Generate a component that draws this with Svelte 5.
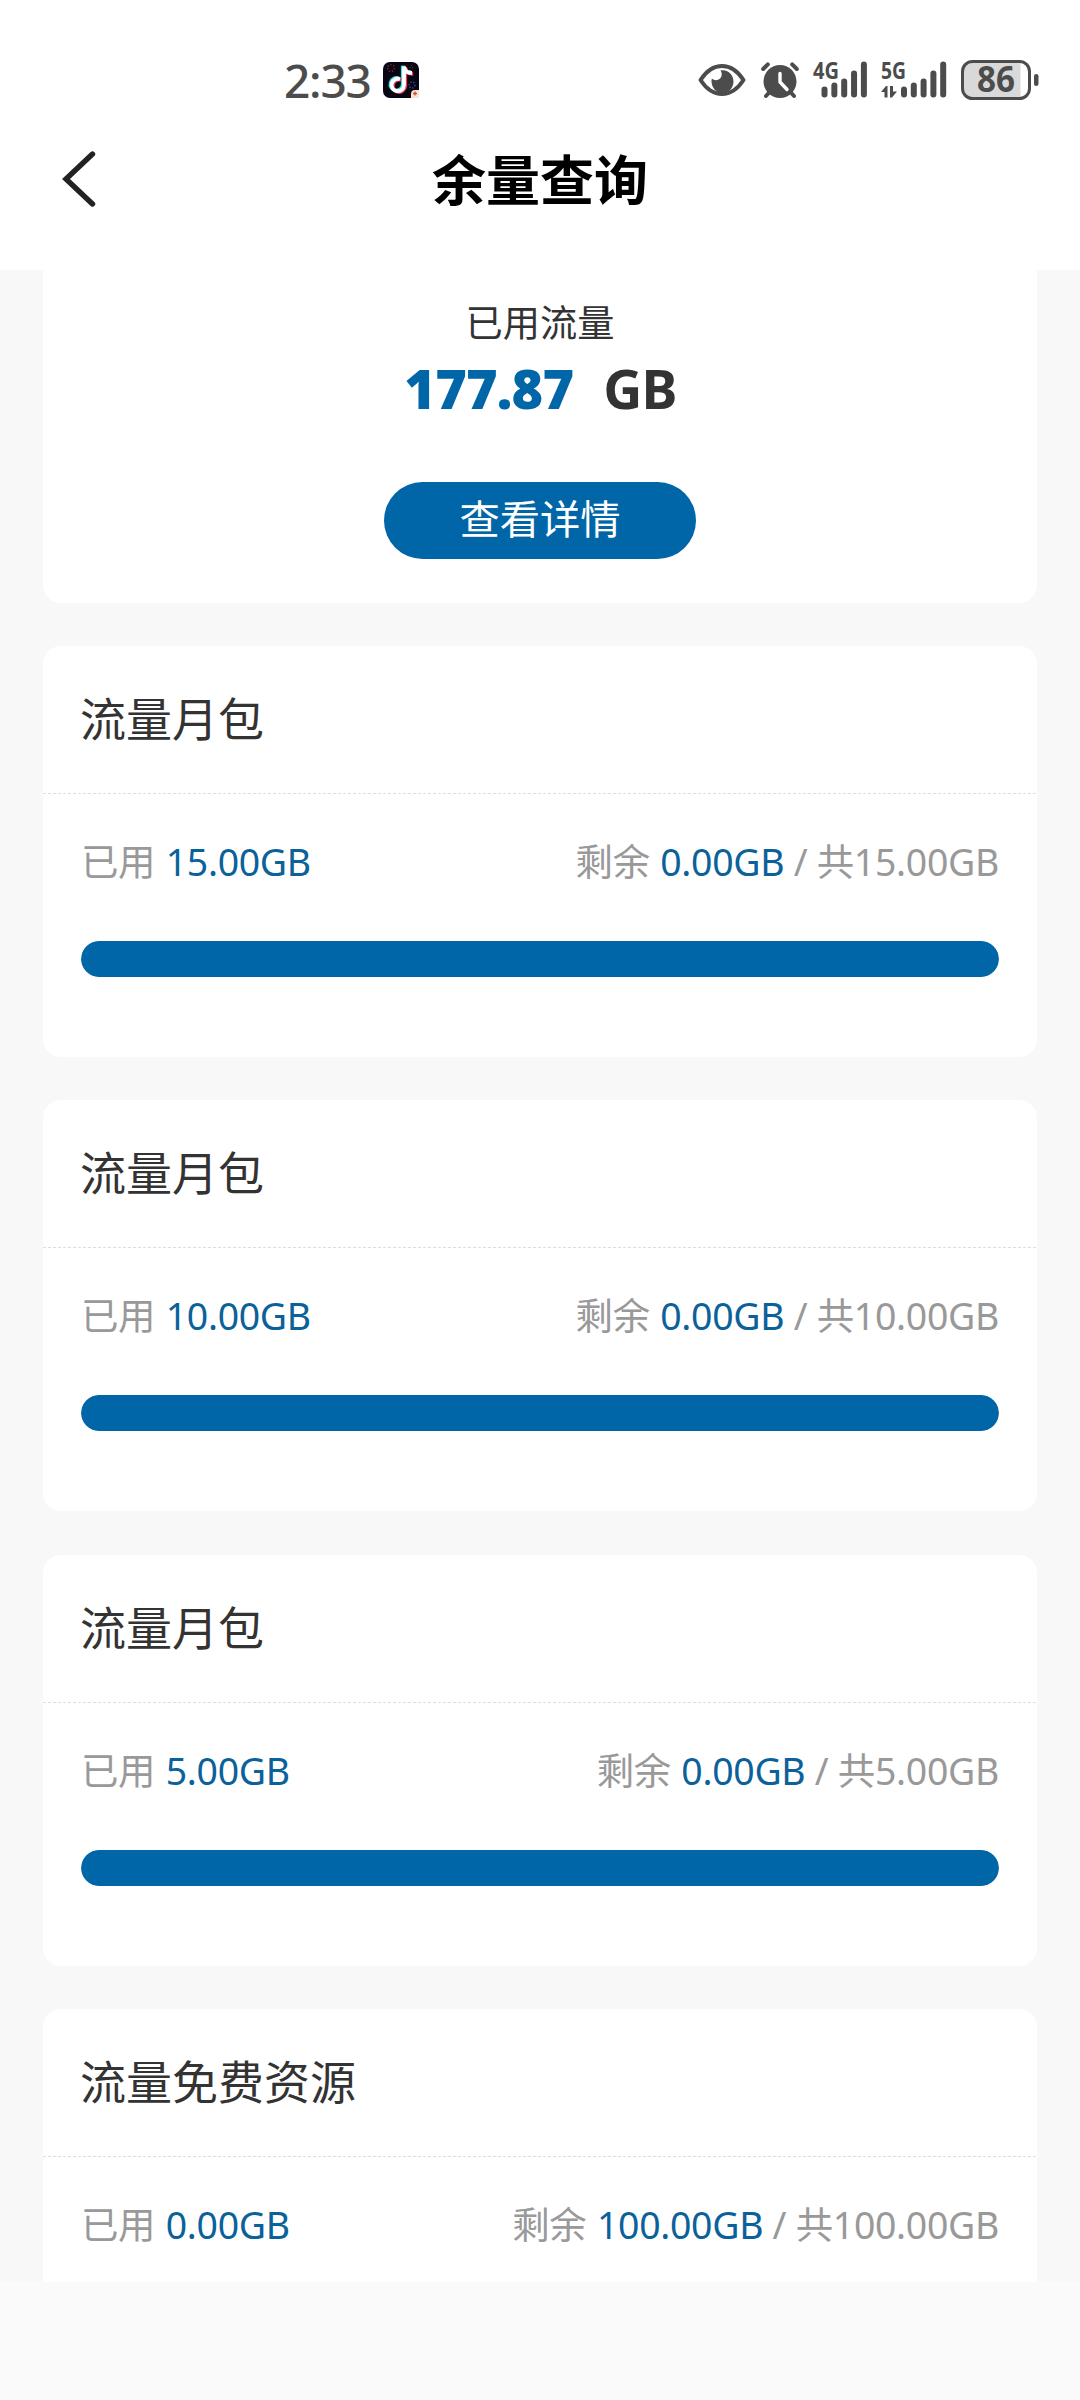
<script lang="ts">
  type Plan = { title: string; used: number; left: number; total: number };

  export let time: string = '2:33';
  export let battery: number = 86;
  export let usedTotal: string = '177.87';

  let plans: Plan[] = [
    { title: '流量月包', used: 15, left: 0, total: 15 },
    { title: '流量月包', used: 10, left: 0, total: 10 },
    { title: '流量月包', used: 5, left: 0, total: 5 },
    { title: '流量免费资源', used: 0, left: 100, total: 100 }
  ];

  // top edge of each signal bar, shortest first
  const signalTops = [25, 21, 17, 9, 0];

  const gb = (n: number) => n.toFixed(2) + 'GB';
  const percent = (p: Plan) => (p.used / p.total) * 100;
</script>

<div class="screen">
  <div class="status-bar">
    <span class="time">{time}</span>
    <svg class="app-icon" width="36" height="36" viewBox="0 0 36 36">
      <rect width="36" height="36" rx="7" fill="#070713" />
      <g fill="none" stroke-width="1.4" stroke-dasharray="1.3 1.7">
        <circle cx="8" cy="6" r="3.4" stroke="#8a2440" />
        <circle cx="29" cy="23" r="3" stroke="#3a47a8" />
        <circle cx="28.5" cy="5" r="1.5" stroke="#5c1a36" />
      </g>
      <g fill="none" stroke-width="3.8">
        <path d="M17 17.2a6.2 6.2 0 1 0 4 6V4.500c.5 4 3.500 6.500 8 6.500" stroke="#3fe0dc" transform="translate(-1.2 -.8)" />
        <path d="M17 17.2a6.2 6.2 0 1 0 4 6V4.500c.5 4 3.500 6.500 8 6.500" stroke="#f03a56" transform="translate(1.2 .8)" />
        <path d="M17 17.2a6.2 6.2 0 1 0 4 6V4.500c.5 4 3.500 6.500 8 6.500" stroke="#fff" />
      </g>
      <path d="M28 36v-4q0-4 4-4h4v8z" fill="#fbe3cf" />
      <path d="M32 29.500v4M30 31.500h4" stroke="#d8473f" stroke-width="1.3" />
    </svg>

    <div class="indicators">
      <svg class="eye" width="48" height="34" viewBox="0 0 48 34">
        <path d="M2.500 17C8 8.500 15.500 3 24 3s16 5.500 21.500 14C40 25.500 32.500 31 24 31S8 25.500 2.500 17z" fill="none" stroke="#4c4c4c" stroke-width="4" stroke-linejoin="round" />
        <path d="M22.500 7.500C30 6 35.500 12 35.500 18.500 35.500 25 30.500 30 24.500 30S13.500 25 13.500 18q0-1 .4-2.500c2.600 2.600 7 2 8.800-.8 1.600-2.600 1.200-5.200-.2-7.200z" fill="#4c4c4c" />
      </svg>
      <svg class="alarm" width="38" height="37" viewBox="0 0 38 37">
        <g stroke="#4c4c4c" stroke-width="4" stroke-linecap="round">
          <path d="M2.200 7L6.800 2.400M35.800 7L31.200 2.400M9 29.500L5 34M29 29.500l4 4.500" />
        </g>
        <circle cx="19" cy="19.500" r="16.500" fill="#4c4c4c" />
        <path d="M19 11.500V20l7 7.500" fill="none" stroke="#fff" stroke-width="3.4" stroke-linecap="round" stroke-linejoin="round" />
      </svg>
      <svg class="signal" width="54" height="38" viewBox="0 0 54 38">
        <text x="0" y="17.500" textLength="26" lengthAdjust="spacingAndGlyphs">4G</text>
        {#each signalTops as top, i}
          <rect x={8.5 + i * 9.85} y={top + 0.5} width="6" height={36 - top} rx="3" />
        {/each}
      </svg>
      <svg class="signal" width="66" height="38" viewBox="0 0 66 38">
        <text x="0" y="17.500" textLength="25" lengthAdjust="spacingAndGlyphs">5G</text>
        <path d="M0 31l5-6h1.500v11.500h-3V31zM16 30.500l-5 6H9V25h3v5.500z" />
        {#each signalTops as top, i}
          <rect x={20 + i * 9.8} y={top + 0.5} width="6" height={36 - top} rx="3" />
        {/each}
      </svg>
      <svg class="battery" width="78" height="40" viewBox="0 0 78 40">
        <path d="M13 2h46.500v36H13Q2 38 2 27V13Q2 2 13 2z" fill="#d9d9d9" />
        <rect x="1.5" y="1.5" width="67" height="37" rx="10" fill="none" stroke="#4c4c4c" stroke-width="3" />
        <rect x="73" y="14" width="4.5" height="12" rx="2.2" fill="#4c4c4c" />
        <text x="16" y="32" textLength="38" lengthAdjust="spacingAndGlyphs">{battery}</text>
      </svg>
    </div>
  </div>

  <header>
    <svg class="back" width="36" height="56" viewBox="0 0 36 56">
      <path d="M31.500 3L5 28l26.500 25" fill="none" stroke="#222" stroke-width="5.4" stroke-linecap="round" />
    </svg>
    <h1>余量查询</h1>
  </header>

  <main>
    <section class="summary">
      <p class="label">已用流量</p>
      <p class="amount"><b>{usedTotal}</b><span>GB</span></p>
      <button>查看详情</button>
    </section>

    {#each plans as plan}
      <section class="card">
        <h2>{plan.title}</h2>
        <div class="usage">
          <div class="row">
            <span>已用 <em>{gb(plan.used)}</em></span>
            <span>剩余 <em>{gb(plan.left)}</em> / 共{gb(plan.total)}</span>
          </div>
          <div class="track">
            <div class="fill" style="width: {percent(plan)}%"></div>
          </div>
        </div>
      </section>
    {/each}
  </main>
</div>

<style>
  :global(body) {
    margin: 0;
    background: #fafafa;
  }

  .screen {
    display: flex;
    flex-direction: column;
    width: 1080px;
    height: 2400px;
    overflow: hidden;
    background: #fafafa;
    color: #333;
    font-family: 'Noto Sans', 'Noto Sans CJK SC', sans-serif;
  }

  .status-bar {
    display: flex;
    align-items: center;
    box-sizing: border-box;
    flex: none;
    height: 120px;
    padding: 40px 41px 0 284px;
    background: #fff;
  }

  .time {
    width: 99px;
    color: #4c4c4c;
    font-size: 46px;
    font-weight: 500;
    line-height: 80px;
    letter-spacing: -1.2px;
  }

  .indicators {
    display: flex;
    align-items: center;
    margin-left: auto;
  }

  .indicators svg {
    overflow: visible;
  }

  .alarm {
    margin-left: 15px;
  }

  .signal,
  .battery {
    margin-left: 14px;
  }

  .signal {
    fill: #4c4c4c;
  }

  .signal text {
    font-size: 23px;
    font-weight: 700;
  }

  .battery text {
    fill: #4c4c4c;
    font-size: 35px;
    font-weight: 700;
  }

  header {
    display: grid;
    grid-template-columns: 140px 1fr 140px;
    flex: none;
    height: 150px;
    background: #fff;
  }

  .back {
    margin: 31px 0 0 61px;
  }

  h1 {
    margin: 0;
    color: #000;
    font-size: 54px;
    font-weight: 700;
    line-height: 120px;
    text-align: center;
  }

  main {
    display: flex;
    flex-direction: column;
    gap: 43.33px;
    box-sizing: border-box;
    flex: none;
    height: 2012px;
    padding: 0 43px;
    overflow: hidden;
    background: #f8f8f8;
  }

  .summary {
    display: flex;
    flex-direction: column;
    align-items: center;
    flex: none;
    height: 332.67px;
    border-radius: 0 0 18px 18px;
    background: #fff;
  }

  p {
    margin: 0;
  }

  .label {
    margin-top: 25px;
    font-size: 37.2px;
    line-height: 56px;
  }

  .amount {
    display: flex;
    gap: 30px;
    padding-left: 1px;
    font-size: 54px;
    font-weight: 700;
    line-height: 74px;
    letter-spacing: -0.8px;
  }

  .amount b {
    color: #0066a8;
  }

  button {
    width: 312px;
    height: 77px;
    margin-top: 57px;
    padding: 0 0 3px;
    border: 0;
    border-radius: 39px;
    background: #0066a8;
    color: #fff;
    font-family: inherit;
    font-size: 40.3px;
    line-height: 74px;
  }

  .card {
    flex: none;
    height: 411px;
    border-radius: 18px;
    background: #fff;
  }

  h2 {
    height: 148px;
    margin: 0;
    padding-left: 37px;
    background: repeating-linear-gradient(90deg, #dedede 0 3px, transparent 3px 5px) bottom / 100% 1px no-repeat;
    font-size: 46px;
    font-weight: 400;
    line-height: 145px;
  }

  .usage {
    padding: 0 38px;
  }

  .row {
    display: flex;
    justify-content: space-between;
    height: 147px;
    color: #999;
    font-size: 37.44px;
    line-height: 136px;
    letter-spacing: -0.3px;
  }

  em {
    margin-left: 1px;
    color: #0b6199;
    font-style: normal;
  }

  .track {
    height: 36px;
    border-radius: 18px;
    background: #eee;
    overflow: hidden;
  }

  .fill {
    height: 100%;
    border-radius: 18px;
    background: #0066a8;
  }
</style>
